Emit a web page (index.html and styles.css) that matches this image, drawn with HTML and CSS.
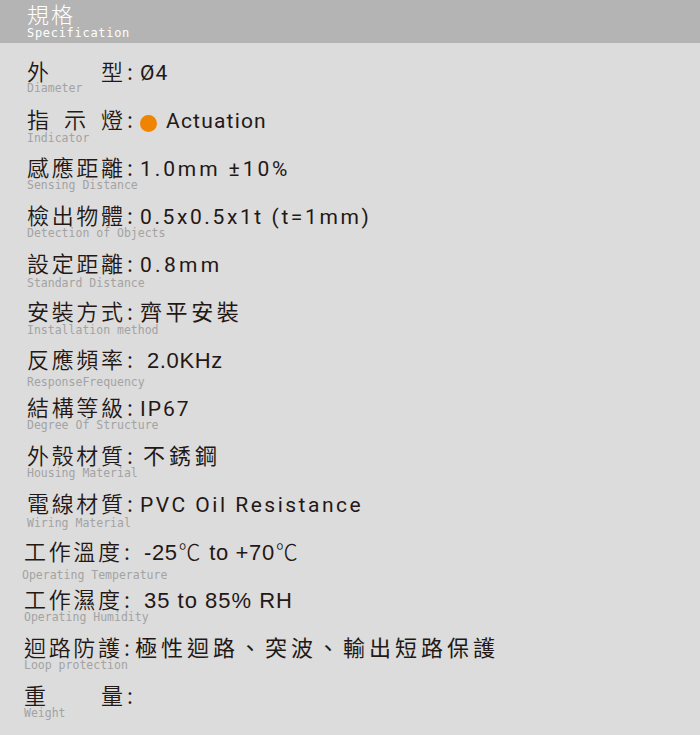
FILE: index.html
```html
<!DOCTYPE html>
<html lang="zh-Hant">
<head>
<meta charset="utf-8">
<title>規格 Specification</title>
<link rel="stylesheet" href="styles.css">
</head>
<body>
<header class="header">
  <div class="header-title">規格</div>
  <div class="header-sub">Specification</div>
</header>
<main class="specs">
  <div class="row">
    <div class="line"><span class="label"><span>外</span><span>型</span></span><span class="colon">:</span><span class="val val--tight">Ø4</span></div>
    <div class="sub sub--d0">Diameter</div>
  </div>
  <div class="row">
    <div class="line"><span class="label"><span>指</span><span>示</span><span>燈</span></span><span class="colon">:</span><span class="dot"></span><span class="val val--a">Actuation</span></div>
    <div class="sub sub--d2">Indicator</div>
  </div>
  <div class="row">
    <div class="line"><span class="label"><span>感</span><span>應</span><span>距</span><span>離</span></span><span class="colon">:</span><span class="val val--r3">1.0mm ±10%</span></div>
    <div class="sub">Sensing Distance</div>
  </div>
  <div class="row">
    <div class="line"><span class="label"><span>檢</span><span>出</span><span>物</span><span>體</span></span><span class="colon">:</span><span class="val val--wide">0.5x0.5x1t (t=1mm)</span></div>
    <div class="sub">Detection of Objects</div>
  </div>
  <div class="row">
    <div class="line"><span class="label"><span>設</span><span>定</span><span>距</span><span>離</span></span><span class="colon">:</span><span class="val val--r5">0.8mm</span></div>
    <div class="sub sub--d3">Standard Distance</div>
  </div>
  <div class="row">
    <div class="line"><span class="label"><span>安</span><span>裝</span><span>方</span><span>式</span></span><span class="colon">:</span><span class="val val--cjk">齊平安裝</span></div>
    <div class="sub sub--d2">Installation method</div>
  </div>
  <div class="row">
    <div class="line"><span class="label"><span>反</span><span>應</span><span>頻</span><span>率</span></span><span class="colon">:</span><span class="val val--bold">2.0KHz</span></div>
    <div class="sub sub--d6">ResponseFrequency</div>
  </div>
  <div class="row">
    <div class="line"><span class="label"><span>結</span><span>構</span><span>等</span><span>級</span></span><span class="colon">:</span><span class="val">IP67</span></div>
    <div class="sub">Degree Of Structure</div>
  </div>
  <div class="row">
    <div class="line"><span class="label"><span>外</span><span>殼</span><span>材</span><span>質</span></span><span class="colon">:</span><span class="val val--cjk val--cjk-gap">不銹鋼</span></div>
    <div class="sub">Housing Material</div>
  </div>
  <div class="row">
    <div class="line"><span class="label"><span>電</span><span>線</span><span>材</span><span>質</span></span><span class="colon">:</span><span class="val val--pvc">PVC Oil Resistance</span></div>
    <div class="sub sub--d3">Wiring Material</div>
  </div>
  <div class="row row--left">
    <div class="line"><span class="label"><span>工</span><span>作</span><span>溫</span><span>度</span></span><span class="colon">:</span><span class="val val--bold">-25<span class="deg">℃</span> to +70<span class="deg">℃</span></span></div>
    <div class="sub sub--d7 sub--out">Operating Temperature</div>
  </div>
  <div class="row row--left">
    <div class="line"><span class="label"><span>工</span><span>作</span><span>濕</span><span>度</span></span><span class="colon">:</span><span class="val val--bold val--hum">35 to 85% RH</span></div>
    <div class="sub">Operating Humidity</div>
  </div>
  <div class="row row--left">
    <div class="line"><span class="label"><span>迴</span><span>路</span><span>防</span><span>護</span></span><span class="colon">:</span><span class="val val--cjk val--cjk-tight">極性迴路、突波、輸出短路保護</span></div>
    <div class="sub">Loop protection</div>
  </div>
  <div class="row row--left">
    <div class="line"><span class="label label--wide"><span>重</span><span>量</span></span><span class="colon">:</span></div>
    <div class="sub">Weight</div>
  </div>
</main>
</body>
</html>
```
FILE: styles.css
```css
* {
  box-sizing: border-box;
  margin: 0;
  padding: 0;
}

html,
body {
  width: 700px;
  height: 735px;
  overflow: hidden;
}

body {
  background: #dcdcdc;
  color: #231815;
  font-family: "Noto Sans CJK TC", "Noto Sans CJK SC", sans-serif;
}

.header {
  height: 43px;
  background: #b4b4b4;
  color: #ffffff;
  padding: 1px 0 0 27px;
}

.header-title {
  font-size: 22px;
  line-height: 24px;
  letter-spacing: 2px;
  font-weight: 300;
}

.header-sub {
  font-family: "DejaVu Sans Mono", monospace;
  font-size: 12px;
  line-height: 13px;
  letter-spacing: 0.7px;
  margin-top: 2px;
}

.specs {
  display: flex;
  flex-direction: column;
  padding-top: 15px;
}

.row {
  height: 48px;
  padding-left: 27px;
}

.row--left {
  padding-left: 24px;
}

.line {
  display: flex;
  align-items: baseline;
  height: 24px;
  line-height: 24px;
  font-size: 22px;
  font-weight: 350;
  white-space: nowrap;
}

.label {
  display: inline-flex;
  justify-content: space-between;
  width: 96px;
}

.label--wide {
  width: 99px;
}

.colon {
  display: inline-block;
  width: 17px;
  padding-left: 4px;
}

.val {
  font-family: "Roboto", "Liberation Sans", sans-serif;
  font-weight: 400;
  font-size: 21px;
  letter-spacing: 2px;
}

.val--a {
  letter-spacing: 1.2px;
}

.val--tight {
  letter-spacing: 1px;
}

.val--r3 {
  letter-spacing: 2.9px;
}

.val--r5 {
  letter-spacing: 3.3px;
}

.val--wide {
  letter-spacing: 2.6px;
}

.val--pvc {
  letter-spacing: 2.5px;
}

.val--bold {
  font-family: "Liberation Sans", "Noto Sans CJK TC", sans-serif;
  font-weight: 400;
  font-size: 22px;
  letter-spacing: 0.6px;
  margin-left: 7px;
}

.val--hum {
  letter-spacing: 1px;
}

.deg {
  font-family: "Noto Sans CJK TC", sans-serif;
  font-weight: 300;
  letter-spacing: 2px;
  margin-left: 1px;
}

.val--cjk {
  font-family: "Noto Sans CJK TC", sans-serif;
  font-size: 22px;
  letter-spacing: 3.6px;
}

.val--cjk-gap {
  margin-left: 3px;
  letter-spacing: 4px;
}

.val--cjk-tight {
  margin-left: -2px;
  letter-spacing: 4px;
}

.dot {
  display: inline-block;
  align-self: center;
  width: 17px;
  height: 17px;
  margin-top: 11px;
  margin-right: 9px;
  border-radius: 50%;
  background: #f08300;
}

.sub {
  font-family: "DejaVu Sans Mono", monospace;
  font-size: 11.5px;
  line-height: 12px;
  color: #a3a3a3;
  margin-top: 1px;
  white-space: nowrap;
}

.sub--d0 {
  margin-top: 0;
}

.sub--d2 {
  margin-top: 2px;
}

.sub--d3 {
  margin-top: 3px;
}

.sub--d6 {
  margin-top: 6px;
}

.sub--d7 {
  margin-top: 7px;
}

.sub--out {
  margin-left: -2px;
}
```
